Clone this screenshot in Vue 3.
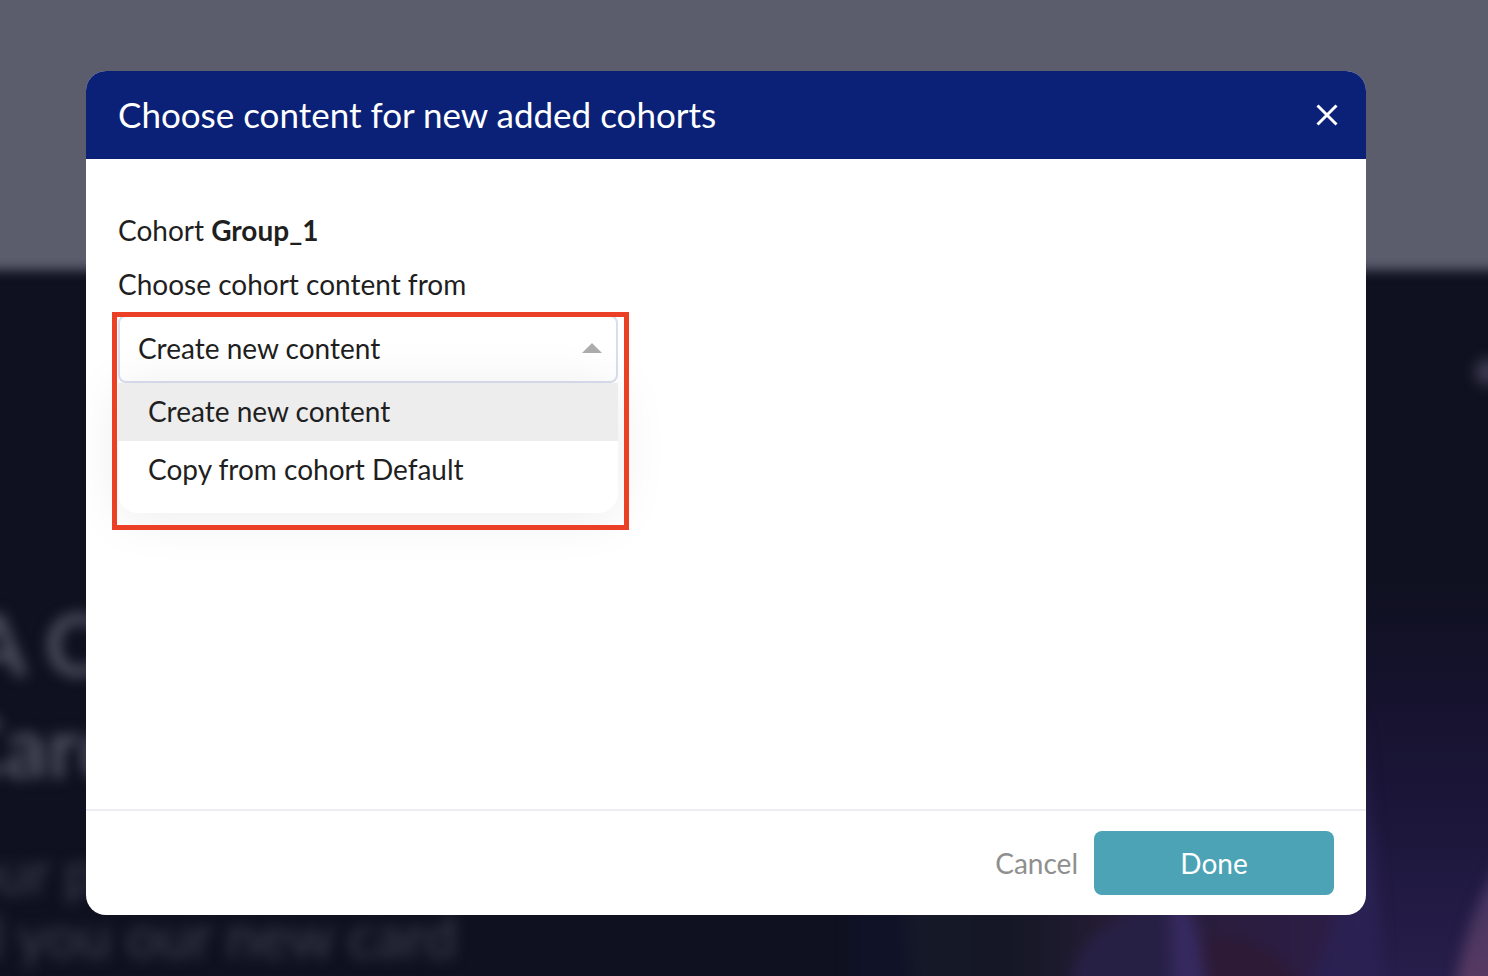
<script setup>
import { ref } from 'vue'

const options = ['Create new content', 'Copy from cohort Default']
const selected = ref(options[0])
const open = ref(true)

function choose(option) {
  selected.value = option
  open.value = false
}
</script>

<template>
  <div class="page">
    <svg class="backdrop" viewBox="0 0 1488 976" preserveAspectRatio="xMinYMin slice" aria-hidden="true">
      <defs>
        <linearGradient id="glow" x1="0" y1="0" x2="0" y2="1">
          <stop offset="0" stop-color="#0f1120" />
          <stop offset="0.25" stop-color="#15122c" />
          <stop offset="0.6" stop-color="#1c163a" />
          <stop offset="1" stop-color="#271e4b" />
        </linearGradient>
        <linearGradient id="plum" x1="0" y1="0" x2="1" y2="0">
          <stop offset="0" stop-color="#151828" />
          <stop offset="0.25" stop-color="#151726" />
          <stop offset="0.5" stop-color="#271d36" />
          <stop offset="1" stop-color="#2d1d47" />
        </linearGradient>
        <linearGradient id="ray" x1="0" y1="0" x2="0" y2="1">
          <stop offset="0" stop-color="#2a2253" stop-opacity="0" />
          <stop offset="0.6" stop-color="#2a2253" />
          <stop offset="1" stop-color="#2a2050" />
        </linearGradient>
        <linearGradient id="petal" x1="0" y1="0" x2="0" y2="1">
          <stop offset="0" stop-color="#3a3360" />
          <stop offset="0.5" stop-color="#4f3861" />
          <stop offset="1" stop-color="#5f3b66" />
        </linearGradient>
        <filter id="soft" x="-20%" y="-20%" width="140%" height="140%" color-interpolation-filters="sRGB">
          <feGaussianBlur stdDeviation="6" />
        </filter>
        <filter id="softer" x="-20%" y="-20%" width="140%" height="140%" color-interpolation-filters="sRGB">
          <feGaussianBlur stdDeviation="7" />
        </filter>
      </defs>
      <rect width="1488" height="976" fill="#0f1120" />
      <rect x="-40" y="-60" width="1580" height="330" fill="#5b5d6d" filter="url(#soft)" />
      <rect x="1300" y="580" width="188" height="396" fill="url(#glow)" />
      <g filter="url(#softer)">
        <path d="M850 860H908V1010H850Z" fill="#101228" />
        <path d="M900 860H1350V1010H912Z" fill="url(#plum)" />
        <path d="M1072 1010C1068 950 1078 934 1180 890L1200 1010Z" fill="#272045" />
        <path d="M1168 880H1182L1222 1010H1174Z" fill="#36295f" />
        <path d="M1210 1010L1200 940C1260 930 1290 960 1320 1010Z" fill="#2c1a36" />
        <path d="M1290 1010C1340 950 1350 880 1362 700L1376 860L1384 1010Z" fill="url(#ray)" />
        <path d="M1450 1020C1460 950 1476 890 1510 850V1020Z" fill="url(#petal)" />
      </g>
      <g filter="url(#softer)" fill="#505162">
        <g class="headline">
          <text x="-33" y="676">A C</text>
          <text x="-53" y="778">Card</text>
        </g>
        <circle cx="1488" cy="372" r="13" fill="#3c3b52" />
      </g>
      <g class="copy" filter="url(#softer)" fill="#3d3f50">
        <text x="-36" y="894">our p</text>
        <text x="-29" y="958">d you our new card</text>
      </g>
    </svg>

    <section class="modal" role="dialog" aria-modal="true" aria-labelledby="dialog-title">
      <header class="modal-header">
        <h1 id="dialog-title">Choose content for new added cohorts</h1>
        <button class="close" type="button" aria-label="Close">
          <svg viewBox="0 0 22 22" width="22" height="22" aria-hidden="true">
            <path d="M1.5 1.5L20.5 20.5M20.5 1.5L1.5 20.5" stroke="#fff" stroke-width="3" fill="none" />
          </svg>
        </button>
      </header>

      <div class="modal-body">
        <p class="line">Cohort <strong>Group_1</strong></p>
        <label class="line" for="source">Choose cohort content from</label>
        <div class="field">
          <select id="source" v-model="selected" @mousedown.prevent="open = !open">
            <option v-for="option in options" :key="option">{{ option }}</option>
          </select>
          <svg class="arrow" viewBox="0 0 20 10" width="20" height="10" aria-hidden="true">
            <path d="M0 10L10 0L20 10Z" fill="#adadad" />
          </svg>
          <ul v-if="open" class="menu" role="listbox" aria-label="Cohort content">
            <li
              v-for="option in options"
              :key="option"
              role="option"
              :aria-selected="option === selected"
              :class="{ active: option === selected }"
              @click="choose(option)"
            >{{ option }}</li>
          </ul>
          <div class="highlight"></div>
        </div>
      </div>

      <footer class="modal-footer">
        <button class="cancel" type="button">Cancel</button>
        <button class="done" type="button">Done</button>
      </footer>
    </section>
  </div>
</template>

<style>
body {
  margin: 0;
  background: #0f1120;
}
</style>

<style scoped>
* {
  box-sizing: border-box;
}
.page {
  position: relative;
  display: flex;
  min-height: 100vh;
  padding: 71px 122px 61px 86px;
  overflow: hidden;
  font-family: Lato, "Liberation Sans", sans-serif;
  font-size: 28px;
  color: #1f1f1f;
}
.backdrop {
  position: absolute;
  inset: 0;
  width: 100%;
  height: 100%;
}
.headline {
  font-family: Lato, sans-serif;
  font-size: 86px;
  font-weight: 700;
}
.copy {
  font-family: Lato, sans-serif;
  font-size: 58px;
}
.modal {
  position: relative;
  display: flex;
  flex: 1;
  flex-direction: column;
  min-width: 0;
  overflow: hidden;
  background: #fff;
  border-radius: 20px;
}
.modal-header {
  display: flex;
  align-items: center;
  justify-content: space-between;
  height: 88px;
  padding: 0 28px 0 32px;
  background: #0a2177;
  color: #fff;
}
h1 {
  margin: 0;
  padding-bottom: 2px;
  font-size: 35px;
  font-weight: 400;
  line-height: 44px;
}
button {
  padding: 0;
  border: 0;
  background: none;
  font: inherit;
  cursor: pointer;
}
.close {
  display: flex;
}
.modal-body {
  display: flex;
  flex: 1;
  flex-direction: column;
  align-items: flex-start;
  padding: 52px 32px;
}
.line {
  margin: 0 0 16px;
  line-height: 38px;
}
label.line {
  margin-bottom: 12px;
}
.field {
  position: relative;
  width: 500px;
  max-width: 100%;
}
select {
  display: block;
  width: 100%;
  height: 68px;
  padding: 0 48px 2px 18px;
  border: 2px solid #d9deee;
  border-radius: 8px;
  outline: 0;
  appearance: none;
  background: #fff;
  color: inherit;
  font: inherit;
}
.arrow {
  position: absolute;
  top: 28px;
  right: 16px;
}
.menu {
  position: absolute;
  top: 100%;
  left: 0;
  width: 100%;
  margin: 0;
  padding: 0 0 14px;
  border-radius: 0 0 20px 20px;
  background: #fff;
  box-shadow: 0 4px 52px rgba(0, 0, 0, 0.08);
  list-style: none;
}
.menu li {
  padding: 0 30px 2px;
  line-height: 56px;
  cursor: pointer;
}
.menu li.active {
  background: #ededed;
}
.highlight {
  position: absolute;
  top: -3px;
  right: -11px;
  left: -6px;
  height: 218px;
  border: 5px solid #ec4026;
  pointer-events: none;
}
.modal-footer {
  display: flex;
  align-items: center;
  justify-content: flex-end;
  gap: 16px;
  padding: 20px 32px;
  border-top: 2px solid #ededf3;
}
.cancel {
  color: #8f8f8f;
}
.done {
  width: 240px;
  height: 64px;
  border-radius: 8px;
  background: #4ba3b5;
  color: #fff;
}
</style>
